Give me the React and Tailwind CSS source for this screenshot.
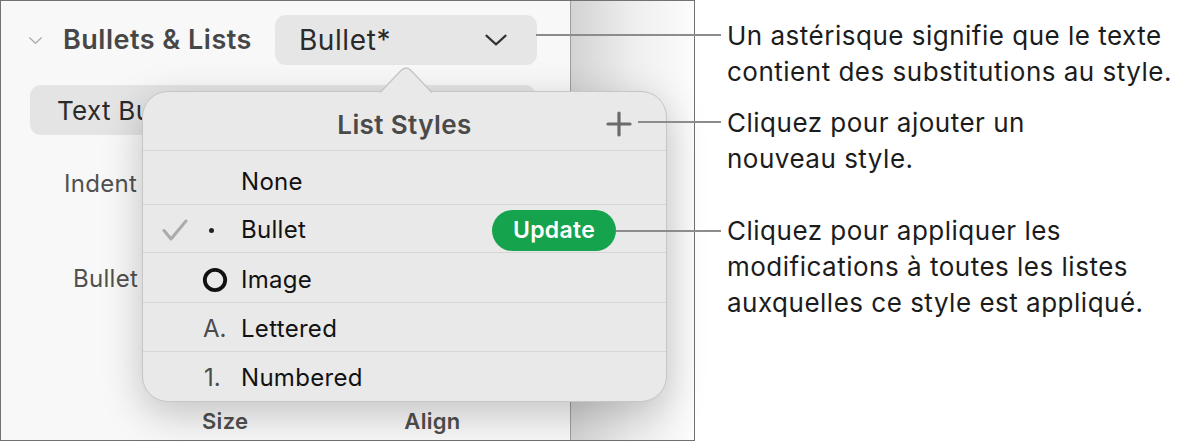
import React from "react";

function Chevron({ className }) {
  return (
    <svg className={className} viewBox="0 0 28 16" fill="none">
      <path d="M3 3 L14 13 L25 3" stroke="currentColor" strokeWidth="2.4" strokeLinecap="round" strokeLinejoin="round" />
    </svg>
  );
}

function Row({ check, prefix, label, update, className = "" }) {
  return (
    <div className={"flex items-center pl-[19px] pr-[50px] border-t-[1.5px] border-[#d6d6d6] " + className}>
      <div className="w-[27px] flex items-center">
        {check && (
          <svg width="26" height="22" viewBox="0 0 26 22" fill="none">
            <path d="M2 11.5 L9 20 L24 2" stroke="#ababab" strokeWidth="3" strokeLinecap="round" strokeLinejoin="round" />
          </svg>
        )}
      </div>
      <div className="w-[52px] pl-[17px] flex items-center text-[24px] text-[#4a4a4a]">{prefix}</div>
      <div className="text-[24px] text-[#121212] leading-none tracking-[0.3px]">{label}</div>
      {update && (
        <div className="ml-auto w-[124px] h-[41px] rounded-full bg-[#16a34d] flex items-center justify-center text-white text-[23px] font-semibold tracking-[0.3px]">
          Update
        </div>
      )}
    </div>
  );
}

export default function App() {
  return (
    <div className="relative w-[1200px] h-[442px] bg-white flex font-[Inter,sans-serif] overflow-hidden">
      {/* Frame */}
      <div className="relative w-[695px] h-[441px] border-[1.5px] border-[#727272] flex">
        {/* Sidebar */}
        <div className="w-[570px] h-full bg-[#f8f8f8] border-r-[1.5px] border-[#9e9e9e] flex flex-col">
          <div className="flex items-center h-[50px] mt-[14px]">
            <Chevron className="ml-[27px] w-[15px] h-[9px] text-[#a9a9a9]" />
            <div className="ml-[20px] text-[27px] font-semibold text-[#474747] tracking-[0.5px]">Bullets &amp; Lists</div>
            <div className="ml-[23px] w-[262px] h-[50px] rounded-[11px] bg-[#e6e6e6] flex items-center pl-[24px] pr-[28px]">
              <span className="text-[28px] text-[#2a2a2a] tracking-[0.6px]">Bullet*</span>
              <Chevron className="ml-auto w-[26px] h-[14px] text-[#333]" />
            </div>
          </div>
          <div className="ml-[29px] mt-[20px] w-[506px] h-[50px] rounded-[11px] bg-[#e4e4e4] flex items-center pl-[27px]">
            <span className="text-[26px] text-[#2a2a2a] tracking-[0.3px]">Text Bullets</span>
          </div>
          <div className="ml-[63px] mt-[34px] text-[24px] text-[#505050] leading-[30px] tracking-[0.3px]">Indent</div>
          <div className="ml-[72px] mt-[65px] text-[24px] text-[#505050] leading-[30px] tracking-[0.3px]">Bullet</div>
          <div className="flex mt-[112px] leading-[30px]">
            <div className="ml-[201px] text-[22px] font-semibold text-[#4f4f4f] tracking-[0.3px]">Size</div>
            <div className="ml-[156px] text-[22px] font-semibold text-[#4f4f4f] tracking-[0.3px]">Align</div>
          </div>
        </div>
        {/* Canvas */}
        <div className="flex-1 h-full bg-gradient-to-r from-[#d3d3d3] via-[#eeeeee] to-[#fcfcfc]" />

        {/* Popover */}
        <div className="absolute left-[141px] top-[90px] w-[525px] h-[311px] rounded-[26px] bg-[#e9e9e9] border-[1.5px] border-[#c6c6c6] shadow-[0_12px_40px_rgba(0,0,0,0.22)] flex flex-col">
          <div className="relative h-[58px] flex items-center justify-center">
            <span className="text-[26px] font-semibold text-[#4a4a4a] mt-[6px] tracking-[0.4px]">List Styles</span>
            <svg className="absolute right-[34px] top-[19px]" width="26" height="26" viewBox="0 0 26 26">
              <path d="M13 2 V24 M2 13 H24" stroke="#6a6a6a" strokeWidth="3.2" strokeLinecap="round" />
            </svg>
          </div>
          <Row label="None" className="h-[54px] pt-[9px]" />
          <Row check prefix={<span className="w-[5px] h-[5px] rounded-full bg-[#222] ml-[3px]" />} label="Bullet" update className="h-[48px] pt-[3px]" />
          <Row
            prefix={
              <svg width="26" height="26" viewBox="0 0 26 26" className="-ml-[4px]">
                <circle cx="13" cy="13" r="10.2" stroke="#111" strokeWidth="3.8" fill="none" />
              </svg>
            }
            label="Image"
            className="h-[50px] pt-[5px]"
          />
          <Row prefix={<span className="-ml-[3px]">A.</span>} label="Lettered" className="h-[49px] pt-[4px]" />
          <Row prefix={<span className="-ml-[2px]">1.</span>} label="Numbered" className="flex-1 pt-[3px]" />
        </div>
        {/* Arrow */}
        <svg className="absolute left-[379px] top-[66px]" width="52" height="27" viewBox="0 0 52 27">
          <path d="M0 26.5 L21.5 3 Q26 -1 30.5 3 L52 26.5 Z" fill="#e9e9e9" />
          <path d="M0 25.5 L21.5 3 Q26 -1 30.5 3 L52 25.5" fill="none" stroke="#c6c6c6" strokeWidth="1.5" />
        </svg>
      </div>

      {/* Callout lines */}
      <div className="absolute left-[536px] top-[34px] w-[185px] h-[2px] bg-[#8c8c8c]" />
      <div className="absolute left-[638px] top-[121px] w-[83px] h-[2px] bg-[#8c8c8c]" />
      <div className="absolute left-[616px] top-[230px] w-[105px] h-[2px] bg-[#8c8c8c]" />

      {/* Callouts */}
      <div className="pl-[32px] pt-[18px] flex flex-col text-[26px] leading-[36px] text-[#1c1c1c] tracking-[0.5px] whitespace-nowrap">
        <div>
          Un astérisque signifie que le texte
          <br />
          contient des substitutions au style.
        </div>
        <div className="mt-[15px]">
          Cliquez pour ajouter un
          <br />
          nouveau style.
        </div>
        <div className="mt-[36px]">
          Cliquez pour appliquer les
          <br />
          modifications à toutes les listes
          <br />
          auxquelles ce style est appliqué.
        </div>
      </div>
    </div>
  );
}
